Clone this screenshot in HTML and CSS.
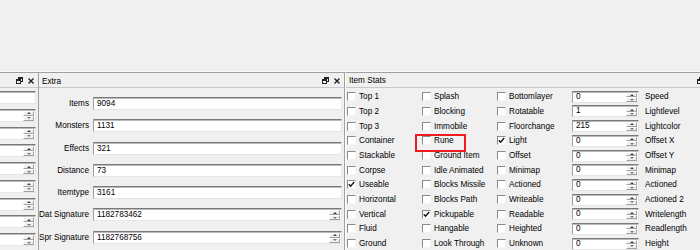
FILE: index.html
```html
<!DOCTYPE html>
<html lang="en">
<head>
    <meta charset="UTF-8">
    <meta name="viewport" content="width=device-width, initial-scale=1.0">
    <title>Item Editor</title>
    <link rel="stylesheet" href="styles.css">
</head>
<body>

<div class="toolbar-space"></div>

<div class="dock">
    <!-- panel on the left, mostly off screen -->
    <div class="panel panel-left">
        <div class="panel-head">
            <span class="panel-title"></span>
            <span class="panel-icons">
                <svg class="ico-restore" width="7" height="7" viewBox="0 0 7 7"><path d="M2 0h5v5h-2v-1h1v-2h-4z"/><path d="M0 2h5v5h-5z M1 4v2h3v-2z"/></svg>
                <svg class="ico-close" width="6" height="6" viewBox="0 0 6 6"><path d="M0.5 0.5L5.5 5.5M5.5 0.5L0.5 5.5"/></svg>
            </span>
        </div>
        <div class="left-body">
            <div class="edit"></div>
            <div class="edit spin"><span></span><span class="btns"><i class="up"></i><i class="dn"></i></span></div>
            <div class="edit spin"><span></span><span class="btns"><i class="up"></i><i class="dn"></i></span></div>
            <div class="edit spin"><span></span><span class="btns"><i class="up"></i><i class="dn"></i></span></div>
            <div class="edit spin"><span></span><span class="btns"><i class="up"></i><i class="dn"></i></span></div>
            <div class="edit spin"><span></span><span class="btns"><i class="up"></i><i class="dn"></i></span></div>
            <div class="edit spin"><span></span><span class="btns"><i class="up"></i><i class="dn"></i></span></div>
            <div class="edit spin"><span></span><span class="btns"><i class="up"></i><i class="dn"></i></span></div>
            <div class="edit spin"><span></span><span class="btns"><i class="up"></i><i class="dn"></i></span></div>
        </div>
    </div>

    <!-- Extra -->
    <div class="panel panel-extra">
        <div class="panel-head">
            <span class="panel-title">Extra</span>
            <span class="panel-icons">
                <svg class="ico-restore" width="7" height="7" viewBox="0 0 7 7"><path d="M2 0h5v5h-2v-1h1v-2h-4z"/><path d="M0 2h5v5h-5z M1 4v2h3v-2z"/></svg>
                <svg class="ico-close" width="6" height="6" viewBox="0 0 6 6"><path d="M0.5 0.5L5.5 5.5M5.5 0.5L0.5 5.5"/></svg>
            </span>
        </div>
        <div class="extra-body">
            <span class="lbl">Items</span><div class="edit">9094</div>
            <span class="lbl">Monsters</span><div class="edit">1131</div>
            <span class="lbl">Effects</span><div class="edit">321</div>
            <span class="lbl">Distance</span><div class="edit">73</div>
            <span class="lbl">Itemtype</span><div class="edit">3161</div>
            <span class="lbl">Dat Signature</span><div class="edit spin"><span>1182783462</span><span class="btns"><i class="up"></i><i class="dn"></i></span></div>
            <span class="lbl">Spr Signature</span><div class="edit spin"><span>1182768756</span><span class="btns"><i class="up"></i><i class="dn"></i></span></div>
        </div>
    </div>

    <!-- Item Stats -->
    <div class="panel panel-stats">
        <div class="panel-head">
            <span class="panel-title">Item Stats</span>
            <span class="panel-icons">
                <svg class="ico-restore" width="7" height="7" viewBox="0 0 7 7"><path d="M2 0h5v5h-2v-1h1v-2h-4z"/><path d="M0 2h5v5h-5z M1 4v2h3v-2z"/></svg>
                <svg class="ico-close" width="6" height="6" viewBox="0 0 6 6"><path d="M0.5 0.5L5.5 5.5M5.5 0.5L0.5 5.5"/></svg>
            </span>
        </div>
        <div class="stats-body">
            <label class="cb"><span class="box"></span>Top 1</label>
            <label class="cb"><span class="box"></span>Splash</label>
            <label class="cb"><span class="box"></span>Bottomlayer</label>
            <div class="edit spin"><span>0</span><span class="btns"><i class="up"></i><i class="dn"></i></span></div>
            <span class="flbl">Speed</span>

            <label class="cb"><span class="box"></span>Top 2</label>
            <label class="cb"><span class="box"></span>Blocking</label>
            <label class="cb"><span class="box"></span>Rotatable</label>
            <div class="edit spin"><span>1</span><span class="btns"><i class="up"></i><i class="dn"></i></span></div>
            <span class="flbl">Lightlevel</span>

            <label class="cb"><span class="box"></span>Top 3</label>
            <label class="cb"><span class="box"></span>Immobile</label>
            <label class="cb"><span class="box"></span>Floorchange</label>
            <div class="edit spin"><span>215</span><span class="btns"><i class="up"></i><i class="dn"></i></span></div>
            <span class="flbl">Lightcolor</span>

            <label class="cb"><span class="box"></span>Container</label>
            <label class="cb rune"><span class="box"></span>Rune<span class="mark"></span></label>
            <label class="cb"><span class="box"><svg width="7" height="7" viewBox="0 0 7 7"><path d="M0.8 3.2L2.6 5.2L6.2 1"/></svg></span>Light</label>
            <div class="edit spin"><span>0</span><span class="btns"><i class="up"></i><i class="dn"></i></span></div>
            <span class="flbl">Offset X</span>

            <label class="cb"><span class="box"></span>Stackable</label>
            <label class="cb"><span class="box"></span>Ground Item</label>
            <label class="cb"><span class="box"></span>Offset</label>
            <div class="edit spin"><span>0</span><span class="btns"><i class="up"></i><i class="dn"></i></span></div>
            <span class="flbl">Offset Y</span>

            <label class="cb"><span class="box"></span>Corpse</label>
            <label class="cb"><span class="box"></span>Idle Animated</label>
            <label class="cb"><span class="box"></span>Minimap</label>
            <div class="edit spin"><span>0</span><span class="btns"><i class="up"></i><i class="dn"></i></span></div>
            <span class="flbl">Minimap</span>

            <label class="cb"><span class="box"><svg width="7" height="7" viewBox="0 0 7 7"><path d="M0.8 3.2L2.6 5.2L6.2 1"/></svg></span>Useable</label>
            <label class="cb"><span class="box"></span>Blocks Missile</label>
            <label class="cb"><span class="box"></span>Actioned</label>
            <div class="edit spin"><span>0</span><span class="btns"><i class="up"></i><i class="dn"></i></span></div>
            <span class="flbl">Actioned</span>

            <label class="cb"><span class="box"></span>Horizontal</label>
            <label class="cb"><span class="box"></span>Blocks Path</label>
            <label class="cb"><span class="box"></span>Writeable</label>
            <div class="edit spin"><span>0</span><span class="btns"><i class="up"></i><i class="dn"></i></span></div>
            <span class="flbl">Actioned 2</span>

            <label class="cb"><span class="box"></span>Vertical</label>
            <label class="cb"><span class="box"><svg width="7" height="7" viewBox="0 0 7 7"><path d="M0.8 3.2L2.6 5.2L6.2 1"/></svg></span>Pickupable</label>
            <label class="cb"><span class="box"></span>Readable</label>
            <div class="edit spin"><span>0</span><span class="btns"><i class="up"></i><i class="dn"></i></span></div>
            <span class="flbl">Writelength</span>

            <label class="cb"><span class="box"></span>Fluid</label>
            <label class="cb"><span class="box"></span>Hangable</label>
            <label class="cb"><span class="box"></span>Heighted</label>
            <div class="edit spin"><span>0</span><span class="btns"><i class="up"></i><i class="dn"></i></span></div>
            <span class="flbl">Readlength</span>

            <label class="cb"><span class="box"></span>Ground</label>
            <label class="cb"><span class="box"></span>Look Through</label>
            <label class="cb"><span class="box"></span>Unknown</label>
            <div class="edit spin"><span>0</span><span class="btns"><i class="up"></i><i class="dn"></i></span></div>
            <span class="flbl">Height</span>
        </div>
    </div>
</div>

</body>
</html>
```

FILE: styles.css
```css
body {
    margin: 0;
    width: 700px;
    height: 250px;
    overflow: hidden;
    background: #f0f0f0;
    font-family: "Liberation Sans", Arial, sans-serif;
    font-size: 8.2px;
    color: #000;
}

.toolbar-space {
    height: 71px;
}

.dock {
    display: flex;
    width: 720px;
    height: 179px;
    border-top: 1px solid #fbfbfb;
}

.panel {
    display: flex;
    flex-direction: column;
    flex-shrink: 0;
    border-top: 1px solid #a0a0a0;
    overflow: hidden;
}
.panel-left {
    width: 38px;
    border-right: 1px solid #a0a0a0;
}
.panel-extra {
    width: 305px;
    border-right: 1px solid #a0a0a0;
}
.panel-stats {
    width: 373px;
    border-left: 1px solid #fff;
}

/* title bar of a docked window */
.panel-head {
    height: 15px;
    box-sizing: border-box;
    display: flex;
    align-items: center;
    justify-content: space-between;
    padding: 2px 4px 0 3px;
    border-bottom: 1px solid #c8c8c8;
}
.panel-icons {
    display: flex;
    align-items: center;
    gap: 5px;
    margin-top: -1px;
}
.ico-restore path {
    fill: #222;
    fill-rule: evenodd;
}
.ico-close path {
    stroke: #222;
    stroke-width: 1.4;
    fill: none;
}

/* sunken text box */
.edit {
    height: 13px;
    box-sizing: border-box;
    background: #fff;
    border: 1px solid;
    border-color: #7a7a7a #e6e6e6 #e6e6e6 #a0a0a0;
    box-shadow: inset 0 1px #b9b9b9;
    padding-left: 3px;
    line-height: 11px;
    white-space: nowrap;
    overflow: hidden;
}
.spin {
    display: flex;
    align-items: stretch;
}
.spin > span:first-child {
    flex: 1;
}
.btns {
    width: 11px;
    display: flex;
    flex-direction: column;
    margin: 1px 1px 0 0;
}
.btns i {
    flex: 1;
    display: flex;
    align-items: center;
    justify-content: center;
    background: #f0f0f0;
    border: 1px solid;
    border-color: #fff #a0a0a0 #a0a0a0 #fff;
}
.btns i::after {
    content: "";
    border-left: 2px solid transparent;
    border-right: 2px solid transparent;
}
.btns .up::after {
    border-bottom: 2px solid #444;
}
.btns .dn::after {
    border-top: 2px solid #777;
}

/* left panel */
.left-body {
    display: grid;
    grid-auto-rows: 17.75px;
    padding: 3px 2px 0 0;
}
.left-body .edit {
    margin-left: -6px;
}

/* Extra panel */
.extra-body {
    display: grid;
    grid-template-columns: 50px 1fr;
    grid-auto-rows: 22.25px;
    align-items: center;
    column-gap: 4px;
    padding: 4.4px 2px 0 0;
}
.lbl {
    text-align: right;
    white-space: nowrap;
    direction: rtl;
}

/* Item Stats panel */
.stats-body {
    display: grid;
    grid-template-columns: 75px 75px 75px 73px auto;
    grid-auto-rows: 14.7px;
    align-items: center;
    padding: 1.8px 0 0 1px;
}
.stats-body .edit {
    height: 12px;
    width: 67px;
    line-height: 10px;
}
.cb {
    display: flex;
    align-items: center;
    gap: 3px;
    white-space: nowrap;
}
.box {
    width: 9px;
    height: 9px;
    box-sizing: border-box;
    background: #fff;
    border: 1px solid;
    border-color: #8a8a8a #f4f4f4 #f4f4f4 #8a8a8a;
    display: flex;
    align-items: center;
    justify-content: center;
}
.box path {
    stroke: #111;
    stroke-width: 1.4;
    fill: none;
}
.flbl {
    white-space: nowrap;
}

/* red highlight drawn over the Rune checkbox */
.rune {
    position: relative;
}
.mark {
    position: absolute;
    left: -7px;
    top: -2px;
    width: 51px;
    height: 18px;
    box-sizing: border-box;
    border: 2px solid #ee1c1c;
}
```
